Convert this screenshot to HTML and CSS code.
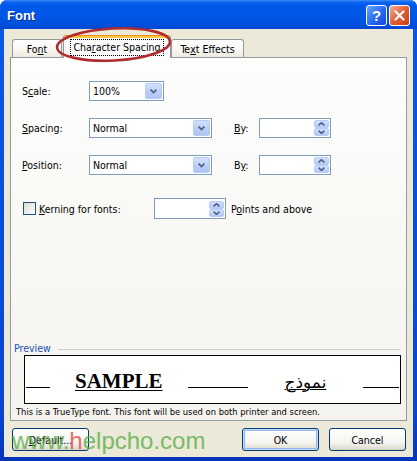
FILE: index.html
```html
<!DOCTYPE html>
<html lang="en">
<head>
  <meta charset="UTF-8" />
  <title>Font</title>
  <link rel="stylesheet" href="styles.css">
</head>
<body>
  <div class="window">
    <div class="titlebar">
      <span class="title">Font</span>
      <div class="caption-btns">
        <span class="cbtn help">?</span>
        <span class="cbtn close">
          <svg width="11" height="11" viewBox="0 0 11 11"><path d="M1.5 1.5 L9.5 9.5 M9.5 1.5 L1.5 9.5" stroke="#fff" stroke-width="2.2" stroke-linecap="round"/></svg>
        </span>
      </div>
    </div>

    <div class="client">
      <div class="tabs">
        <div class="tab tab-font">Fo<u>n</u>t</div>
        <div class="tab tab-spacing active"><span class="focus">Cha<u>r</u>acter Spacing</span></div>
        <div class="tab tab-effects">Te<u>x</u>t Effects</div>
      </div>

      <div class="panel">
        <div class="controls">
          <div class="row">
            <span class="lbl">S<u>c</u>ale:</span>
            <div class="combo combo-scale">
              <span>100%</span>
              <span class="drop"><svg width="7" height="5" viewBox="0 0 7 5"><path d="M0.6 0.6 L3.5 3.6 L6.4 0.6" fill="none" stroke="#4D6185" stroke-width="1.7"/></svg></span>
            </div>
          </div>

          <div class="row">
            <span class="lbl"><u>S</u>pacing:</span>
            <div class="combo combo-wide">
              <span>Normal</span>
              <span class="drop"><svg width="7" height="5" viewBox="0 0 7 5"><path d="M0.6 0.6 L3.5 3.6 L6.4 0.6" fill="none" stroke="#4D6185" stroke-width="1.7"/></svg></span>
            </div>
            <span class="by"><u>B</u>y:</span>
            <div class="spin">
              <span class="spin-btns">
                <span class="half"><svg width="7" height="4" viewBox="0 0 7 4"><path d="M0.6 3.4 L3.5 0.6 L6.4 3.4" fill="none" stroke="#4D6185" stroke-width="1.5"/></svg></span>
                <span class="half"><svg width="7" height="4" viewBox="0 0 7 4"><path d="M0.6 0.6 L3.5 3.4 L6.4 0.6" fill="none" stroke="#4D6185" stroke-width="1.5"/></svg></span>
              </span>
            </div>
          </div>

          <div class="row">
            <span class="lbl"><u>P</u>osition:</span>
            <div class="combo combo-wide">
              <span>Normal</span>
              <span class="drop"><svg width="7" height="5" viewBox="0 0 7 5"><path d="M0.6 0.6 L3.5 3.6 L6.4 0.6" fill="none" stroke="#4D6185" stroke-width="1.7"/></svg></span>
            </div>
            <span class="by">B<u>y</u>:</span>
            <div class="spin">
              <span class="spin-btns">
                <span class="half"><svg width="7" height="4" viewBox="0 0 7 4"><path d="M0.6 3.4 L3.5 0.6 L6.4 3.4" fill="none" stroke="#4D6185" stroke-width="1.5"/></svg></span>
                <span class="half"><svg width="7" height="4" viewBox="0 0 7 4"><path d="M0.6 0.6 L3.5 3.4 L6.4 0.6" fill="none" stroke="#4D6185" stroke-width="1.5"/></svg></span>
              </span>
            </div>
          </div>

          <div class="row row-kern">
            <span class="check"></span>
            <span class="kern-lbl"><u>K</u>erning for fonts:</span>
            <div class="spin">
              <span class="spin-btns">
                <span class="half"><svg width="7" height="4" viewBox="0 0 7 4"><path d="M0.6 3.4 L3.5 0.6 L6.4 3.4" fill="none" stroke="#4D6185" stroke-width="1.5"/></svg></span>
                <span class="half"><svg width="7" height="4" viewBox="0 0 7 4"><path d="M0.6 0.6 L3.5 3.4 L6.4 0.6" fill="none" stroke="#4D6185" stroke-width="1.5"/></svg></span>
              </span>
            </div>
            <span class="points">P<u>o</u>ints and above</span>
          </div>
        </div>

        <div class="spacer"></div>

        <div class="preview">
          <div class="preview-head"><span>Preview</span><span class="rule"></span></div>
          <div class="preview-box">
            <span class="ln ln-1"></span>
            <span class="sample">SAMPLE</span>
            <span class="ln ln-2"></span>
            <span class="arabic" dir="rtl">نموذج</span>
            <span class="ln ln-3"></span>
          </div>
          <div class="caption">This is a TrueType font. This font will be used on both printer and screen.</div>
        </div>
      </div>

      <div class="buttons">
        <button class="btn btn-default"><u>D</u>efault...</button>
        <button class="btn btn-ok">OK</button>
        <button class="btn btn-cancel">Cancel</button>
      </div>
    </div>

    <!-- annotation ring around the active tab -->
    <svg class="ring" width="417" height="80" viewBox="0 0 417 80">
      <ellipse cx="113.5" cy="44.5" rx="56.5" ry="16" transform="rotate(-3 113.5 44.5)" fill="none" stroke="#B02A2E" stroke-width="2.6"/>
    </svg>

    <div class="watermark">www.<span class="wm-h">h</span>elpcho.com</div>
  </div>
</body>
</html>
```

FILE: styles.css
```css
* {
  box-sizing: border-box;
}
body {
  margin: 0;
  background: #fff;
  font-family: "DejaVu Sans Condensed", "DejaVu Sans", sans-serif;
  font-stretch: condensed;
  font-size: 10.5px;
  color: #000;
}
u {
  text-decoration-thickness: 1px;
}
.window {
  position: relative;
  width: 417px;
  height: 461px;
  background: linear-gradient(to bottom, #0A58E6, #0845CF 90%, #0634B8);
  border-radius: 7px 7px 0 0;
  overflow: hidden;
  display: flex;
  flex-direction: column;
}
.titlebar {
  height: 29px;
  flex-shrink: 0;
  display: flex;
  align-items: center;
  justify-content: space-between;
  padding: 1px 7px 0 7px;
  background: linear-gradient(#3F8DF6 0, #0E66F0 2px, #0059EA 5px, #0056E5 55%, #0050DC 85%, #0046CF 100%);
}
.title {
  color: #fff;
  font: bold 13px "Liberation Sans", Arial, sans-serif;
  text-shadow: 1px 1px 0 #0A2A8A;
}
.caption-btns {
  display: flex;
  gap: 2px;
}
.cbtn {
  width: 21px;
  height: 21px;
  border: 1px solid #fff;
  border-radius: 3px;
  display: flex;
  align-items: center;
  justify-content: center;
}
.help {
  background: linear-gradient(135deg, #6AA6FF, #2867F2 55%, #1248D6);
  color: #fff;
  font: bold 15px "Liberation Sans", Arial, sans-serif;
}
.close {
  background: linear-gradient(135deg, #F4B09A, #E35E33 50%, #C83D14);
}
.client {
  flex: 1;
  margin: 0 4px 4px;
  background: #ECE9D8;
  padding: 6px 6px 0 6px;
}
.tabs {
  display: flex;
  align-items: flex-end;
  height: 22px;
  padding-left: 2px;
}
.tab {
  height: 18px;
  border: 1px solid #919B9C;
  border-bottom: none;
  border-radius: 3px 3px 0 0;
  background: linear-gradient(#FFFFFF, #F7F6F2 60%, #ECEAE0);
  display: flex;
  align-items: center;
  justify-content: center;
  padding-top: 1px;
}
.tab-font {
  width: 50px;
}
.tab-spacing {
  width: 108px;
  margin-left: 1px;
}
.tab-effects {
  width: 73px;
}
.tab.active {
  position: relative;
  z-index: 1;
  height: 23px;
  margin-bottom: -1px;
  background: #FCFCFE;
  border-top-color: #E68B2C;
  box-shadow: inset 0 2px 0 #FFC83C;
  padding-top: 1px;
}
.focus {
  border: 1px dotted #000;
  padding: 1px 2px 2px;
  line-height: 12px;
}
.panel {
  width: 397px;
  height: 364px;
  border: 1px solid #919B9C;
  background: linear-gradient(#FDFDFC, #F4F3EE);
  display: flex;
  flex-direction: column;
}
.controls {
  padding: 23px 0 0 11px;
}
.row {
  display: flex;
  align-items: center;
  height: 20px;
  margin-bottom: 17px;
}
.row-kern {
  height: 21px;
  margin-top: 23px;
  margin-bottom: 0;
}
.lbl {
  width: 67px;
}
.combo {
  height: 20px;
  border: 1px solid #7F9DB9;
  background: #fff;
  display: flex;
  align-items: center;
  justify-content: space-between;
  padding-left: 3px;
}
.combo-scale {
  width: 75px;
}
.combo-wide {
  width: 123px;
}
.drop {
  width: 17px;
  height: 16px;
  margin-right: 1px;
  border: 1px solid #B7CBF7;
  border-radius: 2px;
  background: linear-gradient(#D3E0FD, #BACDF8 60%, #AFC4F4);
  display: flex;
  align-items: center;
  justify-content: center;
}
.by {
  margin-left: 22px;
  width: 25px;
}
.spin {
  width: 72px;
  height: 20px;
  border: 1px solid #7F9DB9;
  background: #fff;
  display: flex;
  justify-content: flex-end;
  align-items: center;
  padding-right: 1px;
}
.row-kern .spin {
  height: 21px;
}
.spin-btns {
  width: 15px;
  height: 16px;
  display: flex;
  flex-direction: column;
}
.half {
  flex: 1;
  border: 1px solid #B7CBF7;
  border-radius: 2px;
  background: linear-gradient(#D3E0FD, #B4C8F6);
  display: flex;
  align-items: center;
  justify-content: center;
}
.check {
  width: 13px;
  height: 13px;
  margin-left: 1px;
  border: 1px solid #1C5180;
  background: linear-gradient(135deg, #DCDBD3, #FFFFFF);
}
.kern-lbl {
  margin-left: 3px;
  width: 115px;
}
.points {
  margin-left: 5px;
}
.spacer {
  flex: 1;
}
.preview {
  padding-bottom: 3px;
}
.preview-head {
  display: flex;
  align-items: center;
  margin: 0 6px 0 3px;
  color: #2152B8;
  height: 12px;
}
.rule {
  flex: 1;
  margin-left: 7px;
  margin-top: 2px;
  border-top: 1px solid #D0D0BF;
}
.preview-box {
  margin: 1px 0 0 13px;
  width: 377px;
  height: 49px;
  border: 1px solid #000;
  background: #fff;
  display: flex;
  align-items: baseline;
  padding: 13px 0 0 1px;
}
.ln {
  display: inline-block;
  height: 0;
  border-bottom: 1px solid #000;
  margin-bottom: -1px;
}
.ln-1 {
  width: 24px;
}
.ln-2 {
  width: 60px;
  margin-left: 25px;
}
.ln-3 {
  width: 36px;
  margin-left: 37px;
}
.sample {
  margin-left: 25px;
  font: bold 21px "Liberation Serif", "Times New Roman", serif;
  text-decoration: underline;
  text-decoration-thickness: 1px;
  text-underline-offset: 2px;
}
.arabic {
  margin-left: 37px;
  font: 17px "DejaVu Sans", sans-serif;
  text-decoration: underline;
  text-decoration-thickness: 1px;
}
.caption {
  margin: 2px 0 0 5px;
  font-size: 9.3px;
}
.buttons {
  display: flex;
  margin-top: 7px;
  padding: 0 1px 0 2px;
}
.btn {
  width: 77px;
  height: 23px;
  border: 1px solid #003C74;
  border-radius: 3px;
  background: linear-gradient(#FFFFFF, #F4F4F0 65%, #E3E0D4 90%, #D6D0C5);
  font: inherit;
  font-stretch: condensed;
  color: #000;
  padding: 0;
}
.btn-ok {
  margin-left: auto;
  box-shadow: inset 0 0 0 1px #C9DDFA, inset 0 0 0 2px #94B5EC;
}
.btn-cancel {
  margin-left: 10px;
}
.ring {
  position: absolute;
  left: 0;
  top: 0;
  z-index: 2;
  pointer-events: none;
}
.watermark {
  position: absolute;
  left: 12px;
  top: 427px;
  z-index: 2;
  font: 24px "Liberation Sans", Arial, sans-serif;
  color: #5DAF4C;
  opacity: 0.8;
  pointer-events: none;
}
.wm-h {
  color: #DE4E50;
}
```
